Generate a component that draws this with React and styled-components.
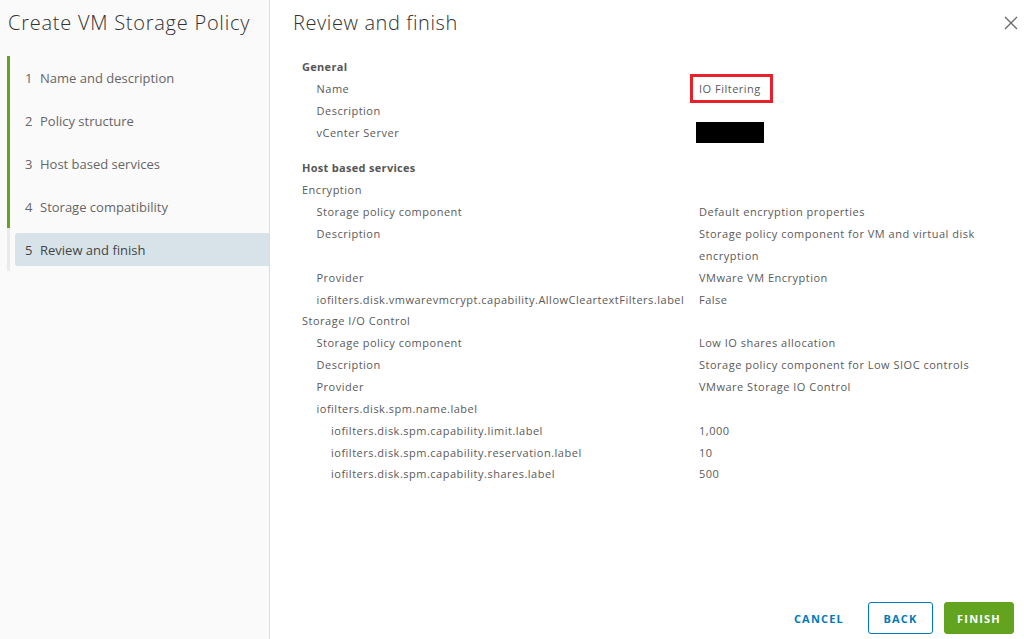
import React from 'react';
import styled, { createGlobalStyle } from 'styled-components';

const GlobalStyle = createGlobalStyle`
  html, body, #root {
    margin: 0;
    padding: 0;
    height: 100%;
  }
  body {
    font-family: 'Open Sans', 'Liberation Sans', sans-serif;
    background: #fff;
    color: #5a5a5a;
  }
`;

const Wizard = styled.div`
  display: flex;
  height: 639px;
  width: 1024px;
  overflow: hidden;
`;

const Sidebar = styled.div`
  width: 269px;
  flex-shrink: 0;
  background: #fafafa;
  border-right: 1px solid #dcdcdc;
  display: flex;
  flex-direction: column;
`;

const SideTitle = styled.h1`
  margin: 0;
  padding: 9px 0 0 8px;
  font-size: 20px;
  line-height: 28px;
  font-weight: 300;
  letter-spacing: 0.75px;
  color: #313131;
  white-space: nowrap;
`;

const StepList = styled.div`
  margin-top: 19px;
  padding-left: 7px;
`;

const Step = styled.div`
  border-left: 3px solid ${(p) => (p.done ? '#62a420' : '#eaeaea')};
  padding: 5px 0 5px 5px;
`;

const StepItem = styled.div`
  display: flex;
  align-items: center;
  height: 33px;
  padding-left: 10px;
  font-size: 13px;
  color: ${(p) => (p.active ? '#454545' : '#666')};
  background: ${(p) => (p.active ? '#d8e3e9' : 'transparent')};
  border-radius: 3px 0 0 3px;
`;

const StepNum = styled.span`
  width: 15px;
  flex-shrink: 0;
`;

const Main = styled.div`
  flex: 1;
  display: flex;
  flex-direction: column;
  min-width: 0;
`;

const Header = styled.div`
  display: flex;
  justify-content: space-between;
  align-items: flex-start;
  padding: 9px 5px 0 23px;
`;

const MainTitle = styled.h2`
  margin: 0;
  font-size: 20px;
  line-height: 28px;
  font-weight: 300;
  letter-spacing: 0.6px;
  color: #313131;
`;

const CloseBtn = styled.button`
  border: none;
  background: none;
  padding: 0;
  margin-top: 6px;
  width: 16px;
  height: 16px;
  cursor: pointer;
  svg {
    display: block;
  }
`;

const Content = styled.div`
  flex: 1;
  padding: 19px 0 0 32px;
`;

const Section = styled.div`
  display: grid;
  grid-template-columns: 397px 300px;
  grid-auto-rows: minmax(21.86px, auto);
  font-size: 11px;
  line-height: 21.86px;
  letter-spacing: 0.5px;
  & + & {
    margin-top: 14px;
  }
`;

const Heading = styled.div`
  grid-column: 1 / -1;
  font-weight: 700;
  letter-spacing: 0.3px;
  color: #565656;
`;

const Label = styled.div`
  padding-left: ${(p) => p.level * 14.5}px;
  white-space: nowrap;
`;

const Value = styled.div``;

const Highlight = styled.span`
  border: 3px solid #e8202a;
  padding: 4px 9px 4px 6px;
  margin-left: -9px;
`;

const Redacted = styled.span`
  display: block;
  width: 68px;
  height: 21px;
  background: #000;
  margin-left: -3px;
`;

const Footer = styled.div`
  display: flex;
  justify-content: flex-end;
  align-items: center;
  gap: 6px;
  padding: 0 10px 5px 0;
`;

const Button = styled.button`
  height: 32px;
  min-width: 65px;
  padding: 0 12px;
  border-radius: 3px;
  font-family: 'Open Sans', 'Liberation Sans', sans-serif;
  font-size: 11px;
  font-weight: 700;
  letter-spacing: 1.2px;
  text-transform: uppercase;
  cursor: pointer;
  border: 1px solid
    ${(p) => (p.variant === 'outline' ? '#0079b8' : p.variant === 'success' ? '#62a420' : 'transparent')};
  background: ${(p) => (p.variant === 'success' ? '#62a420' : 'transparent')};
  color: ${(p) => (p.variant === 'success' ? '#fff' : '#0079b8')};
  & + & {
    margin-left: ${(p) => (p.variant === 'success' ? '5px' : '0')};
  }
`;

const steps = [
  'Name and description',
  'Policy structure',
  'Host based services',
  'Storage compatibility',
  'Review and finish',
];

const sections = [
  {
    title: 'General',
    rows: [
      { label: 'Name', level: 1, value: 'IO Filtering', highlight: true },
      { label: 'Description', level: 1 },
      { label: 'vCenter Server', level: 1, redacted: true },
    ],
  },
  {
    title: 'Host based services',
    rows: [
      { label: 'Encryption', level: 0 },
      { label: 'Storage policy component', level: 1, value: 'Default encryption properties' },
      { label: 'Description', level: 1, value: 'Storage policy component for VM and virtual disk encryption' },
      { label: 'Provider', level: 1, value: 'VMware VM Encryption' },
      { label: 'iofilters.disk.vmwarevmcrypt.capability.AllowCleartextFilters.label', level: 1, value: 'False' },
      { label: 'Storage I/O Control', level: 0 },
      { label: 'Storage policy component', level: 1, value: 'Low IO shares allocation' },
      { label: 'Description', level: 1, value: 'Storage policy component for Low SIOC controls' },
      { label: 'Provider', level: 1, value: 'VMware Storage IO Control' },
      { label: 'iofilters.disk.spm.name.label', level: 1 },
      { label: 'iofilters.disk.spm.capability.limit.label', level: 2, value: '1,000' },
      { label: 'iofilters.disk.spm.capability.reservation.label', level: 2, value: '10' },
      { label: 'iofilters.disk.spm.capability.shares.label', level: 2, value: '500' },
    ],
  },
];

const renderValue = (row) => {
  if (row.redacted) return <Redacted />;
  if (row.highlight) return <Highlight>{row.value}</Highlight>;
  return row.value || '';
};

export default function App() {
  return (
    <>
      <GlobalStyle />
      <Wizard>
        <Sidebar>
          <SideTitle>Create VM Storage Policy</SideTitle>
          <StepList>
            {steps.map((s, i) => (
              <Step key={s} done={i < 4}>
                <StepItem active={i === 4}>
                  <StepNum>{i + 1}</StepNum>
                  {s}
                </StepItem>
              </Step>
            ))}
          </StepList>
        </Sidebar>
        <Main>
          <Header>
            <MainTitle>Review and finish</MainTitle>
            <CloseBtn aria-label="Close">
              <svg width="16" height="16" viewBox="0 0 16 16">
                <path d="M2 2 L14 14 M14 2 L2 14" stroke="#6a6a6a" strokeWidth="1.4" fill="none" />
              </svg>
            </CloseBtn>
          </Header>
          <Content>
            {sections.map((sec) => (
              <Section key={sec.title}>
                <Heading>{sec.title}</Heading>
                {sec.rows.map((row, i) => (
                  <React.Fragment key={i}>
                    <Label level={row.level}>{row.label}</Label>
                    <Value>{renderValue(row)}</Value>
                  </React.Fragment>
                ))}
              </Section>
            ))}
          </Content>
          <Footer>
            <Button variant="flat">Cancel</Button>
            <Button variant="outline">Back</Button>
            <Button variant="success">Finish</Button>
          </Footer>
        </Main>
      </Wizard>
    </>
  );
}
